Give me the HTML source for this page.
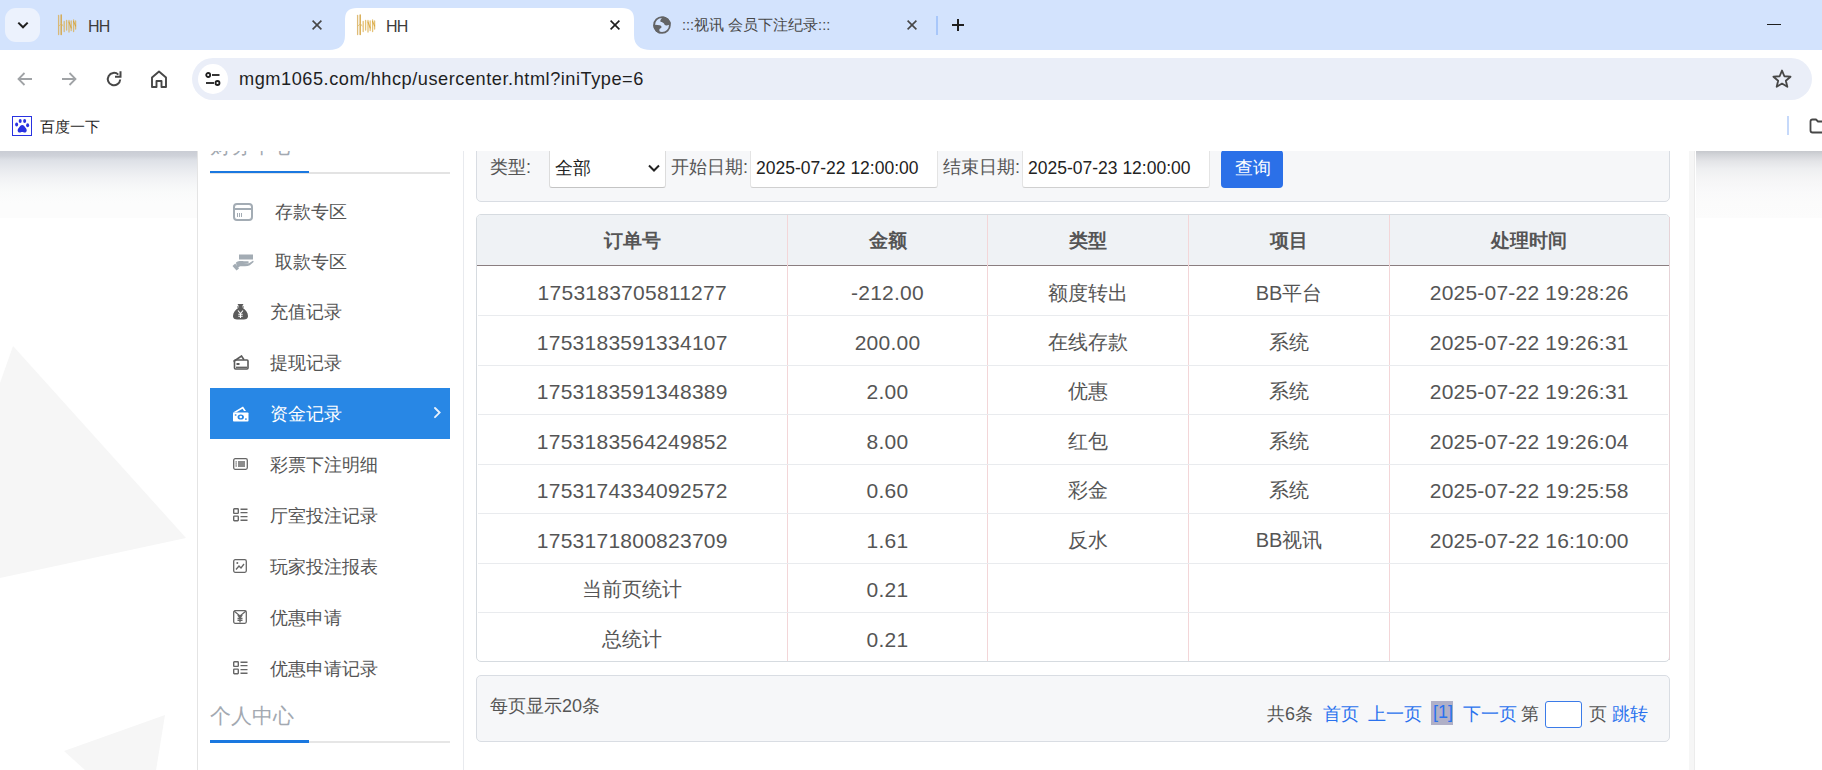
<!DOCTYPE html>
<html><head><meta charset="utf-8">
<style>
*{box-sizing:border-box;margin:0;padding:0}
html,body{width:1822px;height:770px;overflow:hidden;background:#fff;font-family:"Liberation Sans",sans-serif;position:relative}
.a{position:absolute}
#tabs{left:0;top:0;width:1822px;height:50px;background:#d3e3fd}
#toolbar{left:0;top:50px;width:1822px;height:58px;background:#fff}
#bmbar{left:0;top:108px;width:1822px;height:43px;background:#fff}
#page{left:0;top:151px;width:1822px;height:619px;background:#fff;overflow:hidden}
.tabtxt{font-size:16px;letter-spacing:-0.9px;color:#3c3c3c;white-space:nowrap}
.side-t{font-size:18px;color:#555;white-space:nowrap}
.side-h{font-size:21px;color:#a3a9b1;white-space:nowrap}
.flt{font-size:18px;color:#555;white-space:nowrap}
.inp{font-size:17.5px;color:#222;white-space:nowrap}
.th{font-size:19px;font-weight:bold;color:#555;text-align:center;white-space:nowrap}
.td{font-size:20px;color:#555;text-align:center;white-space:nowrap}
.num{font-size:21px;letter-spacing:0.25px}
.dt{font-size:21px;letter-spacing:0.2px}
.pg{font-size:18px;color:#555;white-space:nowrap}
.lk{color:#2a72ee}
</style></head><body>

<!-- TAB STRIP -->
<div id="tabs" class="a">
  <div class="a" style="left:5px;top:8px;width:35px;height:34px;border-radius:11px;background:#ecf2fd"></div>
  <svg class="a" style="left:14.5px;top:16.6px" width="16" height="16" viewBox="0 0 16 16"><path d="M3.3 5.6 L8 10.3 L12.7 5.6" stroke="#1f1f1f" stroke-width="2" fill="none"/></svg>
  <!-- tab1 -->
  <svg class="a" style="left:57px;top:14px" width="22" height="22" viewBox="0 0 22 22">
    <g fill="none" stroke-linecap="round">
      <path d="M1.6 1.5 V20.5" stroke="#d9b060" stroke-width="1.3" opacity="0.85"/>
      <path d="M4.2 1 V20.5" stroke="#d4a443" stroke-width="1.5" opacity="0.9"/>
      <path d="M2 12 L4.5 9.5 L6 12" stroke="#e0b860" stroke-width="1" opacity="0.7"/>
      <path d="M7.2 7.5 V17.5 M9.6 6.5 V16 M12 6.5 V18 M14.2 7 V16.5 M16.6 6 V17.5 M18.6 7 V15" stroke="#dcae4a" stroke-width="1.3" opacity="0.75"/>
      <path d="M12 8 L14.2 14 M16.6 7.5 L18.6 12" stroke="#d49a20" stroke-width="1.1" opacity="0.7"/>
    </g>
  </svg>
  <div class="a tabtxt" style="left:88px;top:17.6px">HH</div>
  <svg class="a" style="left:311px;top:19px" width="12" height="12" viewBox="0 0 12 12"><path d="M1.6 1.6 L10.4 10.4 M10.4 1.6 L1.6 10.4" stroke="#474747" stroke-width="1.6"/></svg>
  <!-- active tab -->
  <svg class="a" style="left:329px;top:7px" width="322" height="43" viewBox="0 0 322 43">
    <path d="M0 43 Q16 43 16 28 L16 12 Q16 1 28 1 L293 1 Q305 1 305 12 L305 28 Q305 43 322 43 Z" fill="#fff"/>
  </svg>
  <svg class="a" style="left:356px;top:14px" width="22" height="22" viewBox="0 0 22 22">
    <g fill="none" stroke-linecap="round">
      <path d="M1.6 1.5 V20.5" stroke="#d9b060" stroke-width="1.3" opacity="0.85"/>
      <path d="M4.2 1 V20.5" stroke="#d4a443" stroke-width="1.5" opacity="0.9"/>
      <path d="M2 12 L4.5 9.5 L6 12" stroke="#e0b860" stroke-width="1" opacity="0.7"/>
      <path d="M7.2 7.5 V17.5 M9.6 6.5 V16 M12 6.5 V18 M14.2 7 V16.5 M16.6 6 V17.5 M18.6 7 V15" stroke="#dcae4a" stroke-width="1.3" opacity="0.75"/>
      <path d="M12 8 L14.2 14 M16.6 7.5 L18.6 12" stroke="#d49a20" stroke-width="1.1" opacity="0.7"/>
    </g>
  </svg>
  <div class="a tabtxt" style="left:386px;top:17.6px">HH</div>
  <svg class="a" style="left:609px;top:19px" width="12" height="12" viewBox="0 0 12 12"><path d="M1.6 1.6 L10.4 10.4 M10.4 1.6 L1.6 10.4" stroke="#1f1f1f" stroke-width="1.6"/></svg>
  <!-- tab3 -->
  <svg class="a" style="left:653px;top:16px" width="18" height="18" viewBox="0 0 18 18">
    <defs><clipPath id="gc"><circle cx="9" cy="9" r="8.8"/></clipPath></defs>
    <circle cx="9" cy="9" r="7.9" fill="none" stroke="#636466" stroke-width="1.8"/>
    <g clip-path="url(#gc)" fill="#636466">
      <path d="M10 0 L8.2 3 C7.3 4 7 5.2 7.8 5.9 C8.8 6.6 10.5 6.3 11 7.5 C11.4 8.7 12.2 9.6 13.6 9.5 C15 9.4 16 8.5 18 8 L18 0 Z"/>
      <path d="M0 8.8 C2 8.5 4.5 8.6 6.5 9.2 C8 9.6 8.6 10.3 8.5 11.2 C8.3 12 7.2 12.3 6.6 13 C6 14 6.5 15.5 7.5 17 L7.5 18 L0 18 Z"/>
    </g>
  </svg>
  <div class="a tabtxt" style="left:682px;top:16px;font-size:14.5px;letter-spacing:0;color:#474747">:::视讯 会员下注纪录:::</div>
  <svg class="a" style="left:906px;top:19px" width="12" height="12" viewBox="0 0 12 12"><path d="M1.6 1.6 L10.4 10.4 M10.4 1.6 L1.6 10.4" stroke="#474747" stroke-width="1.6"/></svg>
  <div class="a" style="left:936px;top:16px;width:2px;height:19px;background:#a8c7fa"></div>
  <svg class="a" style="left:950px;top:17px" width="16" height="16" viewBox="0 0 16 16"><path d="M8 2 V14 M2 8 H14" stroke="#1f1f1f" stroke-width="2"/></svg>
  <div class="a" style="left:1767px;top:24px;width:14px;height:1.4px;background:#1f1f1f"></div>
</div>

<!-- TOOLBAR -->
<div id="toolbar" class="a">
  <svg class="a" style="left:15px;top:19px" width="20" height="20" viewBox="0 0 20 20"><path d="M17 10 H3.5 M9.5 4 L3.5 10 L9.5 16" stroke="#a0a3a6" stroke-width="1.8" fill="none"/></svg>
  <svg class="a" style="left:59px;top:19px" width="20" height="20" viewBox="0 0 20 20"><path d="M3 10 H16.5 M10.5 4 L16.5 10 L10.5 16" stroke="#a0a3a6" stroke-width="1.8" fill="none"/></svg>
  <svg class="a" style="left:104px;top:19px" width="20" height="20" viewBox="0 0 20 20"><path d="M16.2 10.5 A6.2 6.2 0 1 1 14.3 5.6" stroke="#474747" stroke-width="2" fill="none"/><path d="M16.5 2.2 V7.8 H11" stroke="#474747" stroke-width="2" fill="none"/></svg>
  <svg class="a" style="left:149px;top:19px" width="20" height="20" viewBox="0 0 20 20"><path d="M3 18 V8.5 L10 2.5 L17 8.5 V18 H12.5 V12 H7.5 V18 Z" stroke="#474747" stroke-width="1.9" fill="none" stroke-linejoin="round"/></svg>
  <div class="a" style="left:192px;top:8px;width:1620px;height:42px;border-radius:21px;background:#eaeef8"></div>
  <div class="a" style="left:198px;top:13.5px;width:30px;height:30px;border-radius:15px;background:#fff"></div>
  <svg class="a" style="left:203px;top:19px" width="20" height="20" viewBox="0 0 20 20"><g stroke="#1f1f1f" stroke-width="1.8" fill="none"><circle cx="5.2" cy="6" r="2"/><path d="M9 6 H16.5"/><circle cx="14.5" cy="14" r="2"/><path d="M3 14 H11"/></g></svg>
  <div class="a" style="left:239px;top:19px;font-size:18.2px;letter-spacing:0.53px;color:#1f1f1f;white-space:nowrap">mgm1065.com/hhcp/usercenter.html?iniType=6</div>
  <svg class="a" style="left:1771px;top:18px" width="22" height="22" viewBox="0 0 24 24"><path d="M12 2.8 L14.6 9 L21.3 9.5 L16.2 13.9 L17.8 20.5 L12 17 L6.2 20.5 L7.8 13.9 L2.7 9.5 L9.4 9 Z" stroke="#474747" stroke-width="2" fill="none" stroke-linejoin="round"/></svg>
</div>

<!-- BOOKMARK BAR -->
<div id="bmbar" class="a">
  <div class="a" style="left:12px;top:8px;width:20px;height:20px;border:1.5px solid #2932e1;background:#fff"></div>
  <svg class="a" style="left:14px;top:10px" width="16" height="16" viewBox="0 0 16 16"><g fill="#2932e1"><ellipse cx="2.6" cy="6.4" rx="1.5" ry="2"/><ellipse cx="6.2" cy="3" rx="1.5" ry="2"/><ellipse cx="10.6" cy="3" rx="1.5" ry="2"/><ellipse cx="13.6" cy="7.2" rx="1.5" ry="2"/><path d="M8.2 7 C6.8 7 5.6 8.8 4.3 10.6 C3.3 12 3.4 14.6 5.6 14.6 C6.6 14.6 7.3 14 8.2 14 C9.1 14 9.8 14.6 10.8 14.6 C13 14.6 13.1 12 12.1 10.6 C10.8 8.8 9.6 7 8.2 7 Z"/></g></svg>
  <div class="a" style="left:40px;top:10px;font-size:15px;color:#1f1f1f;white-space:nowrap">百度一下</div>
  <div class="a" style="left:1787px;top:8px;width:2px;height:19px;background:#c6d9fa"></div>
  <svg class="a" style="left:1808px;top:7.5px" width="20" height="20" viewBox="0 0 20 20"><path d="M2.5 5.5 Q2.5 3.5 4.5 3.5 H8 L10 5.5 H18 V16.5 H4.5 Q2.5 16.5 2.5 14.5 Z" stroke="#474747" stroke-width="1.8" fill="none" stroke-linejoin="round"/></svg>
</div>

<div id="page" class="a">
  <!-- background top gradient -->
  <div class="a" style="left:0;top:0;width:1822px;height:67px;background:linear-gradient(#c9ccd4 0px,#d0d3da 5px,#dde0e6 9px,#e8eaee 18px,#f2f3f5 28px,#f9fafa 40px,#fcfcfc 52px,#fcfcfc 67px)"></div>
  <div class="a" style="left:1690px;top:0;width:132px;height:67px;background:linear-gradient(#c6c8cd 0px,#d3d5d9 4px,#e3e4e7 10px,#eeeff1 18px,#f5f5f6 28px,#f9f9fa 40px,#fbfbfb 52px,#fcfcfc 67px)"></div>
  
  
  <!-- background triangles -->
  <svg class="a" style="left:0;top:0" width="200" height="619" viewBox="0 0 200 619">
    <polygon points="13,195 186,387 0,427 0,232" fill="#f6f6f6"/>
    <polygon points="165,564 147,675 64,600" fill="#f6f6f6"/>
  </svg>
  <!-- main panel -->
  <div class="a" style="left:197px;top:0;width:1499px;height:619px;background:#fff;border-left:1px solid #e4e4e4"></div>
  <div class="a" style="left:1689px;top:0;width:6px;height:619px;background:#f6f6f6;border-right:1px solid #ececec"></div>
  <!-- sidebar right border -->
  <div class="a" style="left:463px;top:0;width:1px;height:619px;background:#e8eaee"></div>

  <!-- sidebar -->
  <div class="a side-h" style="left:210px;top:-19px">财务中心</div>
  <div class="a" style="left:210px;top:21px;width:240px;height:1.5px;background:#e3e3e3"></div>
  <div class="a" style="left:210px;top:20px;width:99px;height:2px;background:#1a78e0"></div>

  <div class="a" style="left:210px;top:237px;width:240px;height:51px;background:#2887e5"></div>

  <div class="a side-t" style="left:275px;top:49px">存款专区</div>
  <div class="a side-t" style="left:275px;top:99px">取款专区</div>
  <div class="a side-t" style="left:270px;top:148.5px">充值记录</div>
  <div class="a side-t" style="left:270px;top:199.5px">提现记录</div>
  <div class="a side-t" style="left:270px;top:250.5px;color:#fff">资金记录</div>
  <div class="a side-t" style="left:270px;top:301.5px">彩票下注明细</div>
  <div class="a side-t" style="left:270px;top:352.5px">厅室投注记录</div>
  <div class="a side-t" style="left:270px;top:403.5px">玩家投注报表</div>
  <div class="a side-t" style="left:270px;top:454.5px">优惠申请</div>
  <div class="a side-t" style="left:270px;top:505.5px">优惠申请记录</div>
  <svg class="a" style="left:432px;top:255px" width="10" height="14" viewBox="0 0 10 14"><path d="M3 2 L7.6 6.6 L3 11.2" stroke="#e8f1fc" stroke-width="1.9" fill="none" stroke-linecap="round"/></svg>

  <!-- sidebar icons -->
  <svg class="a" style="left:233px;top:52px" width="20" height="18" viewBox="0 0 20 18"><g fill="none" stroke="#a3acb4" stroke-width="2"><rect x="1" y="1" width="18" height="16" rx="3"/><path d="M1 6 H19"/></g><g stroke="#a3acb4" stroke-width="1"><path d="M4.5 10 V14 M6.5 10 V14 M8.5 10 V14"/></g></svg>
  <svg class="a" style="left:232px;top:103px" width="22" height="17" viewBox="0 0 22 17"><g fill="#a3acb4"><rect x="7" y="0.5" width="14" height="5"/><path d="M4 8.5 C6 7 9 6.8 12 7.3 L16 7.3 C17 7.3 17 9 16 9 L11 9.2 L17 9.2 L20.5 7 C21.5 6.5 22 7.5 21.3 8.2 C19 10.5 17 12.2 13 12.3 L8 12.3 L5 14.5 Z"/><path d="M0.5 12 L3.2 9.5 L7 14.5 L4.5 16.5 Z"/></g></svg>
  <svg class="a" style="left:232px;top:152px" width="17" height="17" viewBox="0 0 17 17"><path d="M5.5 1 L11.5 1 L10 3.6 L12 3.6 L12 4.6 L10.2 4.6 C13.5 6.8 16 9.5 16 13 C16 16 14 16.6 8.5 16.6 C3 16.6 1 16 1 13 C1 9.5 3.5 6.8 6.8 4.6 L5 4.6 L5 3.6 L7 3.6 Z" fill="#5b5b5b"/><path d="M6 7.5 L8.5 10.5 L11 7.5 M8.5 10.5 V15 M6.3 11.2 H10.7 M6.3 13.2 H10.7" stroke="#fff" stroke-width="1.1" fill="none"/></svg>
  <svg class="a" style="left:232px;top:204px" width="17" height="15" viewBox="0 0 17 15"><g fill="none" stroke="#5b5b5b" stroke-width="1.6"><path d="M1.5 6.5 L9.5 1 L12 4.8"/><rect x="2.5" y="5" width="13.5" height="9" rx="1"/></g><rect x="4.5" y="8" width="3" height="2" fill="#5b5b5b"/><path d="M4 12.3 H15" stroke="#5b5b5b" stroke-width="1.3"/></svg>
  <svg class="a" style="left:232px;top:255px" width="17" height="16" viewBox="0 0 17 16"><g fill="#fff"><path d="M1 6.5 L11 0.5 L14 5 L12 5 L10.5 2.8 L4 6.5 Z"/><rect x="1" y="6.5" width="15.5" height="9" rx="0.8"/></g><g fill="#2887e5"><ellipse cx="8.75" cy="11" rx="3.2" ry="2.6"/><rect x="2.8" y="8.3" width="1.6" height="1.4"/><rect x="13.1" y="12.4" width="1.6" height="1.4"/></g><ellipse cx="8.75" cy="11" rx="1.3" ry="1.2" fill="#fff"/></svg>
  <svg class="a" style="left:233px;top:307px" width="15" height="12" viewBox="0 0 15 12"><g fill="none" stroke="#666" stroke-width="1.3"><rect x="0.7" y="0.7" width="13.6" height="10.6" rx="1.5"/><path d="M5 4 H12 M5 6 H12 M5 8 H12"/></g><g fill="#666"><rect x="2.5" y="3.3" width="1.3" height="1.3"/><rect x="2.5" y="5.3" width="1.3" height="1.3"/><rect x="2.5" y="7.3" width="1.3" height="1.3"/></g></svg>
  <svg class="a" style="left:233px;top:357px" width="15" height="14" viewBox="0 0 15 14"><g fill="none" stroke="#666" stroke-width="1.4"><rect x="0.7" y="0.8" width="4.6" height="4.6" rx="0.6"/><rect x="0.7" y="8.1" width="4.6" height="4.6" rx="0.6"/><path d="M7.5 1.2 H14.5 M7.5 4.6 H14.5 M7.5 8.6 H14.5 M7.5 12.2 H14.5"/></g></svg>
  <svg class="a" style="left:233px;top:408px" width="14" height="14" viewBox="0 0 14 14"><g fill="none" stroke="#666" stroke-width="1.3"><rect x="0.7" y="0.7" width="12.6" height="12.6" rx="1.5"/><path d="M3 10.5 L6 7 L8 9 L11 5"/></g><circle cx="4.3" cy="4" r="1" fill="#666"/></svg>
  <svg class="a" style="left:233px;top:459px" width="14" height="14" viewBox="0 0 14 14"><g fill="none" stroke="#666" stroke-width="1.3"><rect x="0.7" y="0.7" width="12.6" height="12.6" rx="1.5"/><path d="M1 1 L7 6 L13 1 M4.8 5 L7 8 L9.2 5 M7 8 V12.5 M4.5 8.5 H9.5 M4.5 10.3 H9.5"/></g></svg>
  <svg class="a" style="left:233px;top:510px" width="15" height="14" viewBox="0 0 15 14"><g fill="none" stroke="#666" stroke-width="1.4"><rect x="0.7" y="0.8" width="4.6" height="4.6" rx="0.6"/><rect x="0.7" y="8.1" width="4.6" height="4.6" rx="0.6"/><path d="M7.5 1.2 H14.5 M7.5 4.6 H14.5 M7.5 8.6 H14.5 M7.5 12.2 H14.5"/></g></svg>

  <div class="a side-h" style="left:210px;top:551px">个人中心</div>
  <div class="a" style="left:210px;top:590px;width:240px;height:2px;background:#e6e6e6"></div>
  <div class="a" style="left:210px;top:589px;width:99px;height:3px;background:#1a78e0"></div>

  <!-- FILTER BOX -->
  <div class="a" style="left:476px;top:-10px;width:1194px;height:61px;background:#f6f7f9;border:1px solid #d9dde3;border-radius:5px"></div>
  <div class="a flt" style="left:490px;top:3.5px">类型:</div>
  <div class="a" style="left:549px;top:-3px;width:117px;height:40px;background:#fff;border:1px solid #dcdcdc;border-bottom-color:#c4c4c4;border-radius:3px"></div>
  <div class="a" style="left:555px;top:4.5px;font-size:18px;color:#222">全部</div>
  <svg class="a" style="left:647px;top:12px" width="14" height="10" viewBox="0 0 14 10"><path d="M2 2.5 L7 7.5 L12 2.5" stroke="#222" stroke-width="2" fill="none"/></svg>
  <div class="a flt" style="left:671px;top:3.5px">开始日期:</div>
  <div class="a" style="left:750px;top:-3px;width:188px;height:40px;background:#fff;border:1px solid #e4e4e4;border-bottom-color:#d0d0d0;border-radius:3px"></div>
  <div class="a inp" style="left:756px;top:7px">2025-07-22 12:00:00</div>
  <div class="a flt" style="left:943px;top:3.5px">结束日期:</div>
  <div class="a" style="left:1022px;top:-3px;width:188px;height:40px;background:#fff;border:1px solid #e4e4e4;border-bottom-color:#d0d0d0;border-radius:3px"></div>
  <div class="a inp" style="left:1028px;top:7px">2025-07-23 12:00:00</div>
  <div class="a" style="left:1221px;top:-1px;width:62px;height:38px;background:#2b70e8;border-radius:4px"></div>
  <div class="a" style="left:1235px;top:5px;font-size:18px;color:#fff">查询</div>

  <!-- TABLE -->
  <div class="a" style="left:476px;top:63px;width:1194px;height:448px;background:#fff;border:1px solid #d6dbe0;border-radius:5px;overflow:hidden">
    <div class="a" style="left:0;top:0;width:1194px;height:51px;background:#eff2f5;border-bottom:1px solid #8a7e80"></div>
  </div>
  <div class="a" style="left:1669px;top:66px;width:1px;height:443px;background:#e6d3d7"></div>
  <div class="a" style="left:787.0px;top:64px;width:1px;height:446px;background:#f3d6d8"></div>
  <div class="a" style="left:987.0px;top:64px;width:1px;height:446px;background:#f3d6d8"></div>
  <div class="a" style="left:1188.0px;top:64px;width:1px;height:446px;background:#f3d6d8"></div>
  <div class="a" style="left:1389.0px;top:64px;width:1px;height:446px;background:#f3d6d8"></div>
  <div class="a" style="left:478px;top:164px;width:1190px;height:1px;background:#e9ebee"></div>
  <div class="a" style="left:478px;top:213.5px;width:1190px;height:1px;background:#e9ebee"></div>
  <div class="a" style="left:478px;top:263px;width:1190px;height:1px;background:#e9ebee"></div>
  <div class="a" style="left:478px;top:312.5px;width:1190px;height:1px;background:#e9ebee"></div>
  <div class="a" style="left:478px;top:362px;width:1190px;height:1px;background:#e9ebee"></div>
  <div class="a" style="left:478px;top:411.5px;width:1190px;height:1px;background:#e9ebee"></div>
  <div class="a" style="left:478px;top:461px;width:1190px;height:1px;background:#e9ebee"></div>
  <div class="a th" style="left:477px;top:64px;width:310.5px;height:51px;line-height:51px">订单号</div>
  <div class="a th" style="left:787.5px;top:64px;width:200.0px;height:51px;line-height:51px">金额</div>
  <div class="a th" style="left:987.5px;top:64px;width:201.0px;height:51px;line-height:51px">类型</div>
  <div class="a th" style="left:1188.5px;top:64px;width:201.0px;height:51px;line-height:51px">项目</div>
  <div class="a th" style="left:1389.5px;top:64px;width:279.5px;height:51px;line-height:51px">处理时间</div>
  <div class="a td num" style="left:477px;top:116.5px;width:310.5px;height:50px;line-height:50px">1753183705811277</div>
  <div class="a td num" style="left:787.5px;top:116.5px;width:200.0px;height:50px;line-height:50px">-212.00</div>
  <div class="a td" style="left:987.5px;top:116.5px;width:201.0px;height:50px;line-height:50px">额度转出</div>
  <div class="a td" style="left:1188.5px;top:116.5px;width:201.0px;height:50px;line-height:50px">BB平台</div>
  <div class="a td dt" style="left:1389.5px;top:116.5px;width:279.5px;height:50px;line-height:50px">2025-07-22 19:28:26</div>
  <div class="a td num" style="left:477px;top:166.5px;width:310.5px;height:49.5px;line-height:49.5px">1753183591334107</div>
  <div class="a td num" style="left:787.5px;top:166.5px;width:200.0px;height:49.5px;line-height:49.5px">200.00</div>
  <div class="a td" style="left:987.5px;top:166.5px;width:201.0px;height:49.5px;line-height:49.5px">在线存款</div>
  <div class="a td" style="left:1188.5px;top:166.5px;width:201.0px;height:49.5px;line-height:49.5px">系统</div>
  <div class="a td dt" style="left:1389.5px;top:166.5px;width:279.5px;height:49.5px;line-height:49.5px">2025-07-22 19:26:31</div>
  <div class="a td num" style="left:477px;top:216.0px;width:310.5px;height:49.5px;line-height:49.5px">1753183591348389</div>
  <div class="a td num" style="left:787.5px;top:216.0px;width:200.0px;height:49.5px;line-height:49.5px">2.00</div>
  <div class="a td" style="left:987.5px;top:216.0px;width:201.0px;height:49.5px;line-height:49.5px">优惠</div>
  <div class="a td" style="left:1188.5px;top:216.0px;width:201.0px;height:49.5px;line-height:49.5px">系统</div>
  <div class="a td dt" style="left:1389.5px;top:216.0px;width:279.5px;height:49.5px;line-height:49.5px">2025-07-22 19:26:31</div>
  <div class="a td num" style="left:477px;top:265.5px;width:310.5px;height:49.5px;line-height:49.5px">1753183564249852</div>
  <div class="a td num" style="left:787.5px;top:265.5px;width:200.0px;height:49.5px;line-height:49.5px">8.00</div>
  <div class="a td" style="left:987.5px;top:265.5px;width:201.0px;height:49.5px;line-height:49.5px">红包</div>
  <div class="a td" style="left:1188.5px;top:265.5px;width:201.0px;height:49.5px;line-height:49.5px">系统</div>
  <div class="a td dt" style="left:1389.5px;top:265.5px;width:279.5px;height:49.5px;line-height:49.5px">2025-07-22 19:26:04</div>
  <div class="a td num" style="left:477px;top:315.0px;width:310.5px;height:49.5px;line-height:49.5px">1753174334092572</div>
  <div class="a td num" style="left:787.5px;top:315.0px;width:200.0px;height:49.5px;line-height:49.5px">0.60</div>
  <div class="a td" style="left:987.5px;top:315.0px;width:201.0px;height:49.5px;line-height:49.5px">彩金</div>
  <div class="a td" style="left:1188.5px;top:315.0px;width:201.0px;height:49.5px;line-height:49.5px">系统</div>
  <div class="a td dt" style="left:1389.5px;top:315.0px;width:279.5px;height:49.5px;line-height:49.5px">2025-07-22 19:25:58</div>
  <div class="a td num" style="left:477px;top:364.5px;width:310.5px;height:49.5px;line-height:49.5px">1753171800823709</div>
  <div class="a td num" style="left:787.5px;top:364.5px;width:200.0px;height:49.5px;line-height:49.5px">1.61</div>
  <div class="a td" style="left:987.5px;top:364.5px;width:201.0px;height:49.5px;line-height:49.5px">反水</div>
  <div class="a td" style="left:1188.5px;top:364.5px;width:201.0px;height:49.5px;line-height:49.5px">BB视讯</div>
  <div class="a td dt" style="left:1389.5px;top:364.5px;width:279.5px;height:49.5px;line-height:49.5px">2025-07-22 16:10:00</div>
  <div class="a td" style="left:477px;top:414.0px;width:310.5px;height:49.5px;line-height:49.5px">当前页统计</div>
  <div class="a td num" style="left:787.5px;top:414.0px;width:200.0px;height:49.5px;line-height:49.5px">0.21</div>
  <div class="a td" style="left:477px;top:463.5px;width:310.5px;height:49px;line-height:49px">总统计</div>
  <div class="a td num" style="left:787.5px;top:463.5px;width:200.0px;height:49px;line-height:49px">0.21</div>
  <!-- PAGINATION -->
  <div class="a" style="left:476px;top:524px;width:1194px;height:67px;background:#f6f7f9;border:1px solid #d9dde3;border-radius:5px"></div>
  <div class="a flt" style="left:490px;top:543px">每页显示20条</div>
  <div class="a pg" style="left:1267px;top:551px">共6条</div>
  <div class="a pg lk" style="left:1323px;top:551px">首页</div>
  <div class="a pg lk" style="left:1368px;top:551px">上一页</div>
  <div class="a" style="left:1431px;top:550px;width:22px;height:24px;background:#b0b0c7"></div>
  <div class="a pg lk" style="left:1433px;top:551px">[1]</div>
  <div class="a pg lk" style="left:1463px;top:551px">下一页</div>
  <div class="a pg" style="left:1521px;top:551px">第</div>
  <div class="a" style="left:1545px;top:550px;width:37px;height:27px;background:#fff;border:1px solid #3b7be8;border-radius:3px"></div>
  <div class="a pg" style="left:1589px;top:551px">页</div>
  <div class="a pg lk" style="left:1612px;top:551px">跳转</div>
</div>

</body></html>
